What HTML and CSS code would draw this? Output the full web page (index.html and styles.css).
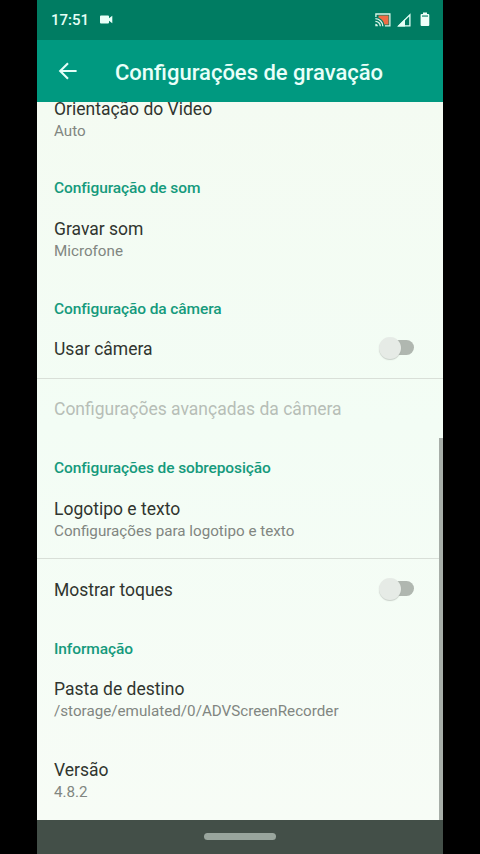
FILE: index.html
```html
<!DOCTYPE html>
<html lang="pt-BR">
<head>
<meta charset="utf-8">
<title>Configurações de gravação</title>
<link rel="stylesheet" href="styles.css">
</head>
<body>
<div class="phone">
  <div class="status">
    <span class="clock">17:51</span>
    <svg class="cam" width="13" height="9" viewBox="0 0 13 9"><path fill="#e9fff8" d="M1 .5h7q1 0 1 1v1.700L12.300.8v7.400L9 5.800v1.700q0 1-1 1H1q-1 0-1-1v-6q0-1 1-1z"/></svg>
    <div class="tray">
      <svg class="cast" width="16" height="14" viewBox="0 0 16 14"><path fill="#ee6c45" d="M3.500 2.600h10v8.800H9.300Q8.300 6.500 3.500 4.800z"/><g fill="none" stroke="#d9f5e8" stroke-width="1.300"><path d="M.9 4V1h14v11.900h-5"/><path d="M.4 5.700a7.500 7.500 0 0 1 7.400 7.500M.4 8.300a4.900 4.900 0 0 1 4.900 4.900"/></g><path fill="#d9f5e8" d="M.3 10.700a2.600 2.600 0 0 1 2.600 2.600H.3z"/></svg>
      <svg class="signal" width="14" height="14" viewBox="0 0 14 14"><path fill="none" stroke="#e4fff6" stroke-width="1.300" d="M12.900 1.700v11.200H1.700z"/><path fill="#e4fff6" d="M.5 13.500 8 6v7.500z"/></svg>
      <svg width="10" height="15" viewBox="0 0 10 15"><path fill="#f0fff9" d="M3 .5h4v1.400h1.200q1.100 0 1.100 1.100v10q0 1.100-1.100 1.100H1.700Q.6 14.100.6 13V3q0-1.100 1.100-1.100H3z"/><path fill="#007c62" d="M2 3.500h6v1.100H2z"/></svg>
    </div>
  </div>
  <div class="appbar">
    <svg class="back" width="20" height="18" viewBox="0 0 20 18"><path fill="none" stroke="#e4fff8" stroke-width="2.100" d="M18.600 9H2.500M10 1.200 2.200 9l7.800 7.800"/></svg>
    <h1>Configurações de gravação</h1>
  </div>
  <div class="list">
    <div class="item two"><div class="title">Orientação do Video</div><div class="sub">Auto</div></div>
    <div class="cat">Configuração de som</div>
    <div class="item two"><div class="title">Gravar som</div><div class="sub">Microfone</div></div>
    <div class="cat">Configuração da câmera</div>
    <div class="item one"><div class="title">Usar câmera</div><div class="switch"><i></i></div></div>
    <div class="item one line off"><div class="title">Configurações avançadas da câmera</div></div>
    <div class="cat">Configurações de sobreposição</div>
    <div class="item two"><div class="title">Logotipo e texto</div><div class="sub">Configurações para logotipo e texto</div></div>
    <div class="item one line"><div class="title">Mostrar toques</div><div class="switch"><i></i></div></div>
    <div class="cat">Informação</div>
    <div class="item two"><div class="title">Pasta de destino</div><div class="sub">/storage/emulated/0/ADVScreenRecorder</div></div>
    <div class="item two"><div class="title">Versão</div><div class="sub">4.8.2</div></div>
    <div class="scrollbar"></div>
  </div>
  <div class="nav"><div class="pill"></div></div>
</div>
</body>
</html>
```
FILE: styles.css
```css
* { box-sizing: border-box; }
body { margin: 0; background: #000; font-family: Roboto, "Liberation Sans", sans-serif; }
.phone { width: 406px; height: 854px; margin-left: 37px; display: flex; flex-direction: column; overflow: hidden; background: #f5fcf5; }
.status { height: 40px; flex: none; background: #007c62; display: flex; align-items: center; padding: 0 13px 1px 14px; }
.clock { color: #e4fff6; font-size: 15px; font-weight: 500; line-height: 20px; }
.cam { margin-left: 11px; }
.tray { margin-left: auto; display: flex; align-items: center; }
.cast { margin-right: 6px; }
.signal { margin-right: 9px; }
.appbar { height: 61.500px; flex: none; background: #009980; display: flex; align-items: center; padding-left: 21px; }
.back { margin-right: 37px; }
h1 { margin: 4px 0 0; color: #e9fff9; font-size: 22px; line-height: 28px; font-weight: 500; white-space: nowrap; }
.list { position: relative; flex: 1; min-height: 0; overflow: hidden; display: flex; flex-direction: column; justify-content: flex-end; background: linear-gradient(#f4fbf2, #f3fdf5 45%, #f7fcf6); }
.item { flex: none; padding: 0 29px 0 17px; color: #30352f; white-space: nowrap; }
.two { height: 81.200px; padding-top: 19.600px; }
.one { height: 60.200px; display: flex; align-items: center; justify-content: space-between; }
.one .title { padding-top: 2px; }
.line { border-top: 1px solid #d9dfd8; }
.title { font-size: 17.500px; line-height: 24px; }
.sub { font-size: 15.200px; line-height: 20px; color: #818681; }
.off { color: #b7beb7; }
.cat { flex: none; height: 39.100px; padding: 20px 0 0 17px; color: #159a7c; font-size: 15.500px; letter-spacing: -0.100px; line-height: 20px; font-weight: 500; white-space: nowrap; }
.switch { width: 35px; height: 24px; display: flex; align-items: center; }
.switch::after { content: ""; width: 27px; height: 15px; margin-left: -14px; border-radius: 8px; background: #b0b7b0; }
.switch i { position: relative; z-index: 1; flex: none; width: 22px; height: 22px; border-radius: 50%; background: #e6ebe6; box-shadow: 0 1px 1px #9da39d80; }
.scrollbar { position: absolute; right: 0; top: 336px; bottom: 0; width: 4px; background: #a7aea8; }
.nav { height: 34px; flex: none; background: #434f48; display: flex; justify-content: center; padding-top: 13px; }
.pill { width: 72px; height: 7px; border-radius: 3.500px; background: #99a59d; }
```
